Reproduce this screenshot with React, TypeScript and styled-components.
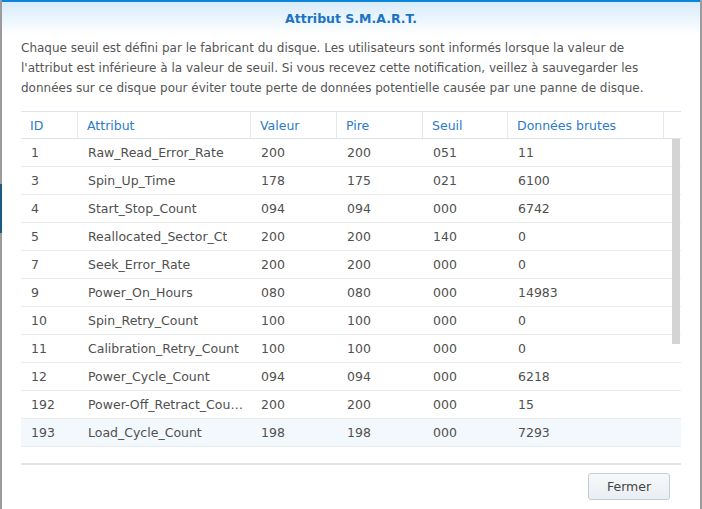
import styled, { createGlobalStyle } from 'styled-components';

const GlobalStyle = createGlobalStyle`
  html, body {
    margin: 0;
    padding: 0;
    height: 100%;
    overflow: hidden;
  }
  body {
    background:
      linear-gradient(
        to bottom,
        #9b9b9b 0 184px,
        #1b5a80 184px 233px,
        #9b9b9b 233px
      ) no-repeat 0 0 / 2px 100%,
      #9b9b9b;
    font-family: 'DejaVu Sans', Verdana, sans-serif;
  }
`;

const Dialog = styled.section`
  margin: 0 2px;
  height: 509px;
  background: #fff;
  border-top: 2px solid #0b86dc;
  display: flex;
  flex-direction: column;
`;

const TitleBar = styled.header`
  height: 33px;
  display: flex;
  align-items: center;
  justify-content: center;
  background: linear-gradient(to bottom, #d7ebfa, #ffffff);

  & > h1 {
    margin: 0;
    font-size: 12.5px;
    font-weight: bold;
    color: #1a74c5;
  }
`;

const Intro = styled.p`
  margin: 3px 0 0 19px;
  max-width: 640px;
  font-size: 12px;
  line-height: 20px;
  color: #555;
`;

const COLS = '57px 173px 86px 86px 85px 156px 17px';

const Grid = styled.div`
  margin: 13px 19px 0 19px;
  width: 660px;
`;

const HeadRow = styled.div`
  display: grid;
  grid-template-columns: ${COLS};
  height: 26px;
  border-top: 1px solid #dde3ea;
  border-bottom: 1px solid #dde3ea;
`;

const HeadCell = styled.div`
  display: flex;
  align-items: center;
  padding-left: 9px;
  font-size: 12.5px;
  color: #2b7bc8;
  border-right: 1px solid #e4e9ef;

  &:last-child {
    border-right: none;
  }
`;

const Body = styled.div`
  position: relative;
  height: 324px;
  overflow: hidden;
  border-bottom: 2px solid #e3e3e3;
`;

const Row = styled.div<{ $active?: boolean }>`
  display: grid;
  grid-template-columns: ${COLS};
  height: 27px;
  border-bottom: 1px solid #ebebeb;
  background: ${(p) => (p.$active ? '#f3f8fd' : '#fff')};
`;

const Cell = styled.div`
  display: flex;
  align-items: center;
  padding: 0 8px 0 10px;
  font-size: 12.5px;
  color: #505050;
  min-width: 0;

  & > span {
    white-space: nowrap;
    overflow: hidden;
    text-overflow: ellipsis;
  }
`;

const ScrollThumb = styled.div`
  position: absolute;
  top: 0;
  right: 1px;
  width: 8px;
  height: 205px;
  background: #d4d4d4;
`;

const Footer = styled.footer`
  display: flex;
  justify-content: flex-end;
  padding: 8px 30px 0 0;
`;

const Button = styled.button`
  width: 82px;
  height: 27px;
  border: 1px solid #c4ccd4;
  border-radius: 3px;
  background: linear-gradient(to bottom, #f7f9fb, #e9eef3);
  font-family: 'DejaVu Sans', Verdana, sans-serif;
  font-size: 12.5px;
  color: #444;
`;

const headers = ['ID', 'Attribut', 'Valeur', 'Pire', 'Seuil', 'Données brutes', ''];

const rows: [string, string, string, string, string, string][] = [
  ['1', 'Raw_Read_Error_Rate', '200', '200', '051', '11'],
  ['3', 'Spin_Up_Time', '178', '175', '021', '6100'],
  ['4', 'Start_Stop_Count', '094', '094', '000', '6742'],
  ['5', 'Reallocated_Sector_Ct', '200', '200', '140', '0'],
  ['7', 'Seek_Error_Rate', '200', '200', '000', '0'],
  ['9', 'Power_On_Hours', '080', '080', '000', '14983'],
  ['10', 'Spin_Retry_Count', '100', '100', '000', '0'],
  ['11', 'Calibration_Retry_Count', '100', '100', '000', '0'],
  ['12', 'Power_Cycle_Count', '094', '094', '000', '6218'],
  ['192', 'Power-Off_Retract_Count', '200', '200', '000', '15'],
  ['193', 'Load_Cycle_Count', '198', '198', '000', '7293'],
];

export default function App() {
  return (
    <>
      <GlobalStyle />
      <Dialog>
        <TitleBar>
          <h1>Attribut S.M.A.R.T.</h1>
        </TitleBar>
        <Intro>
          Chaque seuil est défini par le fabricant du disque. Les utilisateurs sont informés lorsque la valeur de
          l'attribut est inférieure à la valeur de seuil. Si vous recevez cette notification, veillez à sauvegarder les
          données sur ce disque pour éviter toute perte de données potentielle causée par une panne de disque.
        </Intro>
        <Grid>
          <HeadRow>
            {headers.map((h, i) => (
              <HeadCell key={i}>{h}</HeadCell>
            ))}
          </HeadRow>
          <Body>
            {rows.map((r) => (
              <Row key={r[0]} $active={r[0] === '193'}>
                {r.map((v, i) => (
                  <Cell key={i}>
                    <span>{v}</span>
                  </Cell>
                ))}
                <Cell />
              </Row>
            ))}
            <ScrollThumb />
          </Body>
        </Grid>
        <Footer>
          <Button>Fermer</Button>
        </Footer>
      </Dialog>
    </>
  );
}
